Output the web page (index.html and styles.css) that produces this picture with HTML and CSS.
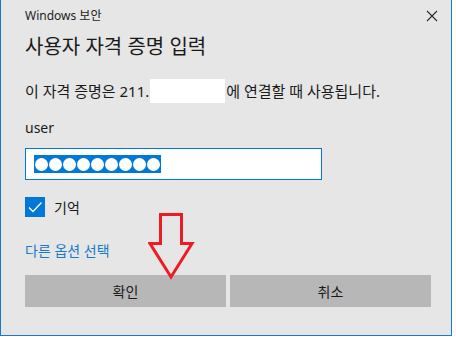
FILE: index.html
```html
<!DOCTYPE html>
<html lang="ko">
<head>
<meta charset="utf-8">
<title>Windows 보안</title>
<link rel="stylesheet" href="styles.css">
</head>
<body>
<div class="window">
  <div class="topbar">
    <span class="app">Windows 보안</span>
    <svg class="close" width="12" height="12" viewBox="0 0 12 12"><path d="M1 1L11 11M11 1L1 11" stroke="#2b2b2b" stroke-width="1.1" fill="none"/></svg>
  </div>
  <h1 class="title">사용자 자격 증명 입력</h1>
  <p class="desc">이 자격 증명은 211.<span class="mask"></span>에 연결할 때 사용됩니다.</p>
  <div class="user">user</div>
  <div class="input">
    <span class="sel">
      <i class="dot"></i><i class="dot"></i><i class="dot"></i><i class="dot"></i><i class="dot"></i><i class="dot"></i><i class="dot"></i><i class="dot"></i><i class="dot"></i>
    </span>
  </div>
  <label class="remember">
    <span class="box"><svg width="20" height="20" viewBox="0 0 20 20"><path d="M4 10.5L8 14.5L16.5 5.5" stroke="#fff" stroke-width="1.3" fill="none"/></svg></span>
    <span>기억</span>
  </label>
  <a class="more">다른 옵션 선택</a>
  <div class="buttons">
    <button class="btn">확인</button>
    <button class="btn">취소</button>
  </div>
  <svg class="arrow" width="50" height="70" viewBox="0 0 50 70"><path d="M12.5 2.5H33.5V31.5H44L23 65L2 31.5H12.5Z" stroke="#ED1C24" stroke-width="3" fill="none" stroke-linejoin="miter"/></svg>
</div>
</body>
</html>
```
FILE: styles.css
```css
html, body {
  margin: 0;
  padding: 0;
  background: #ffffff;
}
body {
  font-family: "Noto Sans", "Noto Sans CJK KR", sans-serif;
  color: #1a1a1a;
}
.window {
  position: relative;
  box-sizing: border-box;
  width: 452px;
  height: 336px;
  background: #e6e6e6;
  border-left: 1px solid #1979ca;
  border-right: 1px solid #1979ca;
  border-bottom: 1px solid #1979ca;
  padding: 0 19px 0 24px;
}
.topbar {
  display: flex;
  justify-content: space-between;
  align-items: center;
  height: 32px;
  margin-right: -6px;
}
.app {
  font-size: 12px;
  line-height: 16px;
  color: #222;
  margin-top: -1px;
}
.close {
  display: block;
  margin-top: -1px;
}
.title {
  margin: 0;
  font-weight: normal;
  font-size: 20px;
  line-height: 28px;
  color: #1a1a1a;
  height: 28px;
  margin-top: 1px;
}
.desc {
  margin: 18px 0 0;
  font-size: 15px;
  line-height: 24px;
  height: 24px;
  color: #1a1a1a;
  display: flex;
  align-items: center;
  white-space: nowrap;
}
.mask {
  display: inline-block;
  width: 75px;
  height: 24px;
  background: #fff;
  margin-left: 1px;
  margin-right: 1px;
}
.user {
  margin-top: 14px;
  font-size: 14px;
  line-height: 22px;
  height: 22px;
}
.input {
  margin-top: 9px;
  box-sizing: border-box;
  width: 297px;
  height: 32px;
  border: 1px solid #0078d7;
  background: #fff;
  display: flex;
  align-items: center;
  padding-left: 8px;
}
.sel {
  display: flex;
  align-items: center;
  gap: 1px;
  background: #0078d7;
  height: 18px;
  padding: 0 1px;
}
.dot {
  display: block;
  width: 13px;
  height: 13px;
  border-radius: 50%;
  background: #fff;
}
.remember {
  margin-top: 16px;
  display: flex;
  align-items: center;
  gap: 9px;
  font-size: 14px;
  height: 22px;
}
.box {
  width: 20px;
  height: 20px;
  background: #0078d7;
  display: block;
}
.box svg { display: block; }
.more {
  display: block;
  margin-top: 23px;
  font-size: 14px;
  line-height: 20px;
  height: 20px;
  color: #1979ca;
  cursor: pointer;
}
.buttons {
  margin-top: 14px;
  display: grid;
  grid-template-columns: 201px 201px;
  gap: 4px;
}
.btn {
  height: 32px;
  border: none;
  background: #b7b7b7;
  font-family: "Noto Sans", "Noto Sans CJK KR", sans-serif;
  font-size: 14px;
  color: #1a1a1a;
  padding: 0;
}
.arrow {
  position: absolute;
  left: 147px;
  top: 212px;
}
```
